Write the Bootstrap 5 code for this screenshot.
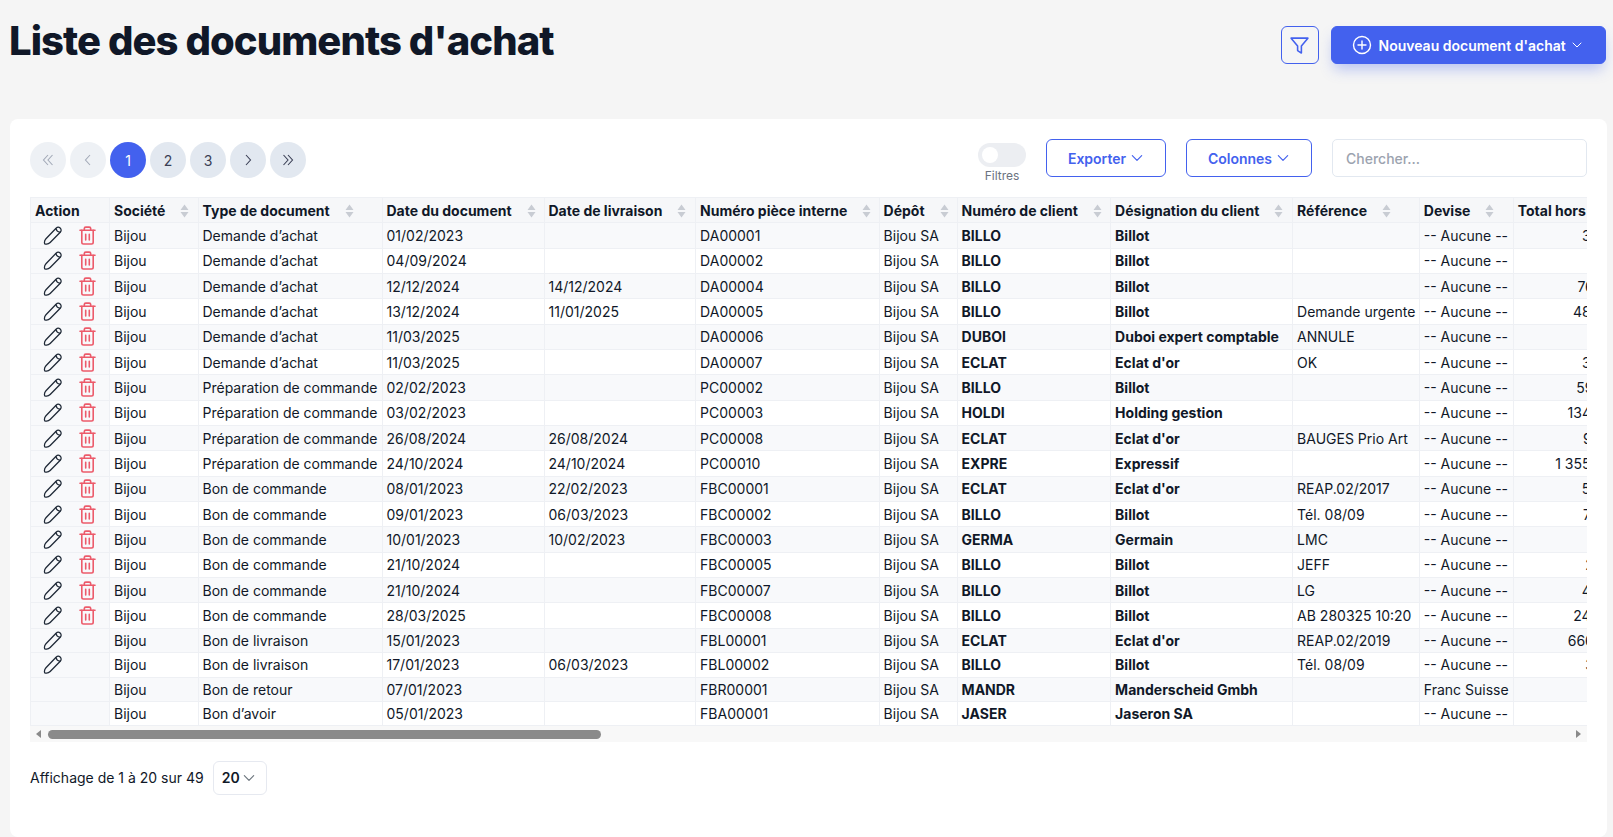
<!DOCTYPE html>
<html lang="fr">
<head>
    <meta charset="UTF-8">
    <meta name="viewport" content="width=device-width, initial-scale=1.0">
    <title>Liste des documents d'achat</title>
    <link href="https://cdn.jsdelivr.net/npm/bootstrap@5.3.3/dist/css/bootstrap.min.css" rel="stylesheet">
    <style>
        html, body { height: 100%; overflow: hidden; }
        body { background: #f5f5f5; font-family: Inter, "Liberation Sans", sans-serif; font-size: 14px; color: #101828; }
        .page-head { height: 119px; padding: 26px 7.5px 0 9px; }
        .page-title { font-size: 40px; font-weight: 800; letter-spacing: -.93px; line-height: 30px; margin: 0; color: #101828; }
        .blue-btn, .blue-outline { --bs-btn-font-size: 14px; --bs-btn-font-weight: 600; --bs-btn-border-radius: 6px; }
        .blue-btn { --bs-btn-bg: #4361ee; --bs-btn-border-color: #4361ee; --bs-btn-color: #fff; --bs-btn-hover-bg: #3a56d8; --bs-btn-hover-color: #fff; height: 38px; width: 275px; padding: 0; box-shadow: 0 8px 14px -3px rgba(67, 97, 238, .35); }
        .blue-outline { --bs-btn-color: #4361ee; --bs-btn-border-color: #4361ee; --bs-btn-bg: transparent; height: 38px; padding: 0; }
        .filter-btn { width: 38px; }
        .new-ico { margin-left: 20px; }
        .new-label { margin-left: 7px; }
        .new-chev { margin-left: 5px; }
        .export-btn { width: 120px; background: #fff; }
        .cols-btn { width: 126px; background: #fff; }
        .main-card { margin: 0 6px 0 10px; height: 718px; border-radius: 8px; }
        .main-card .card-body { padding: 20px 20px 0 20px; }
        .tools-row { height: 58px; }
        .tool-group { gap: 20px; }
        .pager { gap: 4px; margin: 3px 0 0; }
        .pager .page-item .page-link { width: 36px; height: 36px; border-radius: 50% !important; border: 0; margin: 0 !important; padding: 0; display: flex; align-items: center; justify-content: center; background: #e2e8f0; color: #3a3f55; font-size: 14px; }
        .pager .page-item.disabled .page-link { background: #eef1f5; color: #a3aab8; }
        .pager .page-item.active .page-link { background: #4361ee; color: #fff; }
        .filter-switch { width: 48px; }
        .filter-switch .form-check { min-height: 24px; margin: 0; padding: 0; }
        .filter-switch .form-check-input { width: 48px; height: 24px; margin: 0; float: none; display: block; border: 0; background-color: #eceef2; background-image: url("data:image/svg+xml,%3csvg xmlns='http://www.w3.org/2000/svg' viewBox='-4 -4 8 8'%3e%3ccircle r='2.67' fill='%23fff'/%3e%3c/svg%3e"); }
        .filter-label { font-size: 12px; line-height: 14px; color: #6b7280; text-align: center; margin-top: 2px; }
        .search-box { width: 255px; height: 38px; font-size: 14px; font-weight: 500; border-color: #e2e8f0; border-radius: 5px; padding-left: 13px; }
        .search-box::placeholder { color: #9ca3af; }
        .table-clip { overflow: hidden; }
        .doc-table { width: 4310px; table-layout: fixed; margin: 0; font-size: 14px; --bs-table-color: #101828; --bs-table-striped-color: #101828; --bs-table-striped-bg: #f8f9fb; --bs-table-border-color: #eef0f4; }
        .doc-table col:nth-child(1) { width: 79px; }
        .doc-table col:nth-child(2) { width: 88.5px; }
        .doc-table col:nth-child(3) { width: 184px; }
        .doc-table col:nth-child(4) { width: 162px; }
        .doc-table col:nth-child(5) { width: 151.6px; }
        .doc-table col:nth-child(6) { width: 183.5px; }
        .doc-table col:nth-child(7) { width: 78px; }
        .doc-table col:nth-child(8) { width: 153.5px; }
        .doc-table col:nth-child(9) { width: 182px; }
        .doc-table col:nth-child(10) { width: 126.7px; }
        .doc-table col:nth-child(11) { width: 94px; }
        .doc-table col:nth-child(12) { width: 134px; }
        .doc-table th, .doc-table td { padding: 0 5px 0 4px; vertical-align: middle; white-space: nowrap; line-height: 17px; overflow: hidden; }
        .doc-table thead th { height: 25.3px; background: #f6f7f9; --bs-table-bg: #f6f7f9; font-weight: 700; }
        .doc-table tbody tr { height: 24px; }
        .doc-table tbody tr.row-full { height: 25.33px; }
        .doc-table tbody tr.row-edit { height: 24.5px; }
        .doc-table > tbody > tr > td.act-cell { --bs-table-bg-type: #f8f9fb; --bs-table-accent-bg: #f8f9fb; background: #f8f9fb; padding: 0; }
        .doc-table td.strong-cell { font-weight: 700; }
        .sort-mark { display: inline-block; width: 9px; height: 14px; margin-left: 15px; vertical-align: -2px; }
        .act-icons { display: flex; align-items: center; height: 18px; padding-left: 12px; }
        .pen-ico { width: 20px; height: 19px; flex: none; }
        .bin-ico { width: 17px; height: 19px; margin-left: 15.500px; flex: none; }
        .fake-scroll { height: 16px; background: #f8f8f8; padding: 4px 6px 0 6px; }
        .scroll-thumb { height: 9px; background: #8a8a8a; border-radius: 5px; margin-left: 7px; }
        .scroll-arrow { width: 0; height: 0; border-top: 4.5px solid transparent; border-bottom: 4.5px solid transparent; }
        .scroll-arrow.to-left { border-right: 5px solid #8a8a8a; }
        .scroll-arrow.to-right { border-left: 5px solid #8a8a8a; }
        .foot-row { margin-top: 19px; gap: 9px; }
        .size-pick { width: 54px; height: 34px; border: 1px solid #e6e9f0; border-radius: 6px; padding: 0 0 0 8px; font-weight: 600; font-size: 14px; color: #101828; gap: 2px; }
    </style>
</head>
<body>
<svg class="d-none">
    <symbol id="i-chev" viewBox="0 0 12 12"><path d="M2 4l4 4 4-4" fill="none" stroke="currentColor" stroke-width="1" stroke-linecap="round" stroke-linejoin="round"/></symbol>
    <symbol id="i-sort" viewBox="0 0 9 14"><path d="M4.5 0.5L8.5 6H.5zM4.5 13.5L.5 8h8z" fill="#c8ccd3"/></symbol>
    <symbol id="i-pen" viewBox="0 0 19 18"><g fill="none" stroke="#1f2937" stroke-width="1.2" stroke-linejoin="round" stroke-linecap="round"><path d="M1.6 16.9c-.5-1.6-.1-3.4 1.2-4.8l9.6-10c1.1-1.1 2.8-1.2 3.9-.2 1.2 1.1 1.2 2.8.1 4L6.800 15.700c-1.300 1.300-3.300 1.900-5.200 1.200z"/><path d="M12.300 2.400c.4 1.800 1.800 3.100 3.700 3.500"/></g></symbol>
    <symbol id="i-bin" viewBox="0 0 17 19"><g fill="none" stroke="#ec5b6b" stroke-width="1.600" stroke-linecap="round" stroke-linejoin="round"><path d="M1 4.300h15"/><path d="M5.300 4.300V2.600c0-.9.6-1.500 1.500-1.500h3.400c.9 0 1.500.6 1.500 1.500v1.700"/><path d="M2.800 4.300v12c0 1 .7 1.700 1.700 1.700h8c1 0 1.700-.7 1.700-1.700v-12"/><path d="M6.700 8.300v5.700M10.300 8.300v5.700"/></g></symbol>
</svg>

<div class="page-head d-flex justify-content-between align-items-start">
    <h1 class="page-title">Liste des documents d'achat</h1>
    <div class="d-flex gap-2 align-items-start">
        <button type="button" class="btn blue-outline filter-btn d-flex align-items-center justify-content-center me-1">
            <svg width="21" height="21" viewBox="0 0 20 20"><path d="M2 3h16l-6.200 7.400v6.800l-3.600-2.400v-4.400z" fill="none" stroke="#4361ee" stroke-width="1.500" stroke-linejoin="round"/></svg>
        </button>
        <button type="button" class="btn blue-btn d-flex align-items-center">
            <svg class="new-ico" width="20" height="20" viewBox="0 0 20 20"><circle cx="10" cy="10" r="8.500" fill="none" stroke="#fff" stroke-width="1.400"/><path d="M10 6v8M6 10h8" stroke="#fff" stroke-width="1.400" stroke-linecap="round"/></svg>
            <span class="new-label">Nouveau document d'achat</span>
            <svg class="new-chev" width="12" height="12"><use href="#i-chev"/></svg>
        </button>
    </div>
</div>

<div class="card main-card border-0">
    <div class="card-body">
        <div class="tools-row d-flex justify-content-between align-items-start">
            <ul class="pagination pager">
                <li class="page-item disabled"><a class="page-link" href="#"><svg width="14" height="14" viewBox="0 0 14 14"><path d="M7 2L2.500 7 7 12M11.500 2L7 7l4.500 5" fill="none" stroke="currentColor" stroke-width="1.100"/></svg></a></li>
                <li class="page-item disabled"><a class="page-link" href="#"><svg width="14" height="14" viewBox="0 0 14 14"><path d="M9 2L4.500 7 9 12" fill="none" stroke="currentColor" stroke-width="1.100"/></svg></a></li>
                <li class="page-item active"><a class="page-link" href="#">1</a></li>
                <li class="page-item"><a class="page-link" href="#">2</a></li>
                <li class="page-item"><a class="page-link" href="#">3</a></li>
                <li class="page-item"><a class="page-link" href="#"><svg width="14" height="14" viewBox="0 0 14 14"><path d="M5 2l4.500 5L5 12" fill="none" stroke="currentColor" stroke-width="1.100"/></svg></a></li>
                <li class="page-item"><a class="page-link" href="#"><svg width="14" height="14" viewBox="0 0 14 14"><path d="M2.500 2L7 7l-4.500 5M7 2l4.500 5L7 12" fill="none" stroke="currentColor" stroke-width="1.100"/></svg></a></li>
            </ul>
            <div class="d-flex align-items-start tool-group">
                <div class="filter-switch mt-1">
                    <div class="form-check form-switch"><input class="form-check-input" type="checkbox" role="switch" id="filterSwitch"></div>
                    <div class="filter-label">Filtres</div>
                </div>
                <button type="button" class="btn blue-outline export-btn d-flex align-items-center justify-content-center">Exporter<svg class="ms-1" width="14" height="14"><use href="#i-chev"/></svg></button>
                <button type="button" class="btn blue-outline cols-btn d-flex align-items-center justify-content-center">Colonnes<svg class="ms-1" width="14" height="14"><use href="#i-chev"/></svg></button>
                <input type="text" class="form-control search-box" placeholder="Chercher...">
            </div>
        </div>

        <div class="table-clip">
            <table class="table table-bordered table-striped doc-table">
                <colgroup><col><col><col><col><col><col><col><col><col><col><col><col><col></colgroup>
                <thead><tr id="headRow"></tr></thead>
                <tbody id="docRows"></tbody>
            </table>
        </div>
        <div class="fake-scroll d-flex align-items-start">
            <span class="scroll-arrow to-left"></span>
            <div class="scroll-thumb" id="scrollThumb"></div>
            <span class="scroll-arrow to-right ms-auto"></span>
        </div>

        <div class="foot-row d-flex align-items-center">
            <span>Affichage de 1 à 20 sur 49</span>
            <div class="size-pick d-flex align-items-center">20<svg width="14" height="14" class="text-secondary"><use href="#i-chev"/></svg></div>
        </div>
    </div>
</div>

<script src="https://cdn.jsdelivr.net/npm/bootstrap@5.3.3/dist/js/bootstrap.bundle.min.js"></script>
<script>
    const heads = ['Société', 'Type de document', 'Date du document', 'Date de livraison', 'Numéro pièce interne', 'Dépôt', 'Numéro de client', 'Désignation du client', 'Référence', 'Devise'];
    const aucune = '-- Aucune --';
    const rows = [
        [2, 'Demande d’achat', '01/02/2023', '', 'DA00001', 'BILLO', 'Billot', '', aucune, '3 456,20'],
        [2, 'Demande d’achat', '04/09/2024', '', 'DA00002', 'BILLO', 'Billot', '', aucune, '845,00'],
        [2, 'Demande d’achat', '12/12/2024', '14/12/2024', 'DA00004', 'BILLO', 'Billot', '', aucune, '76 120,00'],
        [2, 'Demande d’achat', '13/12/2024', '11/01/2025', 'DA00005', 'BILLO', 'Billot', 'Demande urgente', aucune, '48 300,50'],
        [2, 'Demande d’achat', '11/03/2025', '', 'DA00006', 'DUBOI', 'Duboi expert comptable', 'ANNULE', aucune, '620,00'],
        [2, 'Demande d’achat', '11/03/2025', '', 'DA00007', 'ECLAT', 'Eclat d\'or', 'OK', aucune, '3 240,00'],
        [2, 'Préparation de commande', '02/02/2023', '', 'PC00002', 'BILLO', 'Billot', '', aucune, '59 410,00'],
        [2, 'Préparation de commande', '03/02/2023', '', 'PC00003', 'HOLDI', 'Holding gestion', '', aucune, '134 250,00'],
        [2, 'Préparation de commande', '26/08/2024', '26/08/2024', 'PC00008', 'ECLAT', 'Eclat d\'or', 'BAUGES Prio Art', aucune, '9 870,00'],
        [2, 'Préparation de commande', '24/10/2024', '24/10/2024', 'PC00010', 'EXPRE', 'Expressif', '', aucune, '1 355 600,00'],
        [2, 'Bon de commande', '08/01/2023', '22/02/2023', 'FBC00001', 'ECLAT', 'Eclat d\'or', 'REAP.02/2017', aucune, '5 640,00'],
        [2, 'Bon de commande', '09/01/2023', '06/03/2023', 'FBC00002', 'BILLO', 'Billot', 'Tél. 08/09', aucune, '7 320,00'],
        [2, 'Bon de commande', '10/01/2023', '10/02/2023', 'FBC00003', 'GERMA', 'Germain', 'LMC', aucune, '410,00'],
        [2, 'Bon de commande', '21/10/2024', '', 'FBC00005', 'BILLO', 'Billot', 'JEFF', aucune, '2 150,00'],
        [2, 'Bon de commande', '21/10/2024', '', 'FBC00007', 'BILLO', 'Billot', 'LG', aucune, '4 280,00'],
        [2, 'Bon de commande', '28/03/2025', '', 'FBC00008', 'BILLO', 'Billot', 'AB 280325 10:20', aucune, '24 900,00'],
        [1, 'Bon de livraison', '15/01/2023', '', 'FBL00001', 'ECLAT', 'Eclat d\'or', 'REAP.02/2019', aucune, '666 120,00'],
        [1, 'Bon de livraison', '17/01/2023', '06/03/2023', 'FBL00002', 'BILLO', 'Billot', 'Tél. 08/09', aucune, '3 120,00'],
        [0, 'Bon de retour', '07/01/2023', '', 'FBR00001', 'MANDR', 'Manderscheid Gmbh', '', 'Franc Suisse', '275,00'],
        [0, 'Bon d’avoir', '05/01/2023', '', 'FBA00001', 'JASER', 'Jaseron SA', '', aucune, '130,00']
    ];

    const sortMark = '<svg class="sort-mark"><use href="#i-sort"/></svg>';
    document.getElementById('headRow').innerHTML =
        '<th>Action</th>' +
        heads.map(h => `<th>${h}${sortMark}</th>`).join('') +
        `<th>Total hors taxes${sortMark}</th><th></th>`;

    const pen = '<svg class="pen-ico"><use href="#i-pen"/></svg>';
    const bin = '<svg class="bin-ico"><use href="#i-bin"/></svg>';
    const rowClass = ['', 'row-edit', 'row-full'];
    document.getElementById('docRows').innerHTML = rows.map(r => `
        <tr class="${rowClass[r[0]]}">
            <td class="act-cell">${r[0] ? `<div class="act-icons">${pen}${r[0] === 2 ? bin : ''}</div>` : ''}</td>
            <td>Bijou</td><td>${r[1]}</td><td>${r[2]}</td><td>${r[3]}</td><td>${r[4]}</td><td>Bijou SA</td>
            <td class="strong-cell">${r[5]}</td><td class="strong-cell">${r[6]}</td><td>${r[7]}</td><td>${r[8]}</td>
            <td class="text-end">${r[9]}</td><td></td>
        </tr>`).join('');

    // same ratio as the real scrollbar: visible width / table width
    document.getElementById('scrollThumb').style.width = Math.round(1530 * 1557 / 4310) + 'px';
</script>
</body>
</html>
